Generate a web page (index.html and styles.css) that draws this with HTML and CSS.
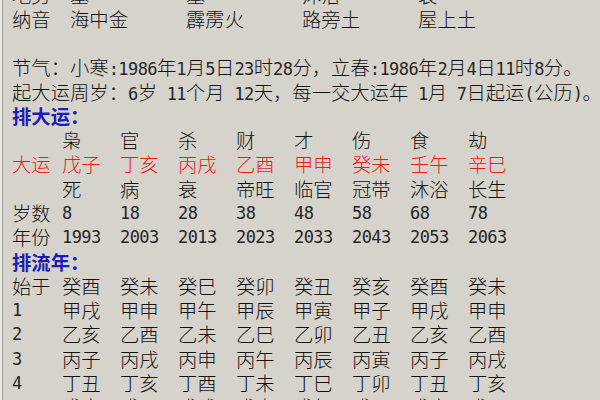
FILE: index.html
```html
<!DOCTYPE html>
<html lang="zh-CN">
<head>
<meta charset="utf-8">
<title>排大运</title>
<link rel="stylesheet" href="styles.css">
</head>
<body>
<div class="screen">
  <div class="sheet">
    <div class="pillars"><span>地势</span><span>墓</span><span>墓</span><span>沐浴</span><span>衰</span></div>
    <div class="pillars"><span>纳音</span><span>海中金</span><span>霹雳火</span><span>路旁土</span><span>屋上土</span></div>
    <div class="blank"></div>
    <p class="line">节气：小寒<span class="a">:1986</span>年<span class="a">1</span>月<span class="a">5</span>日<span class="a">23</span>时<span class="a">28</span>分，立春<span class="a">:1986</span>年<span class="a">2</span>月<span class="a">4</span>日<span class="a">11</span>时<span class="a">8</span>分。</p>
    <p class="line">起大运周岁：<span class="a">6</span>岁<span class="a"> 11</span>个月<span class="a"> 12</span>天，每一交大运年<span class="a"> 1</span>月<span class="a"> 7</span>日起运<span class="a">(</span>公历<span class="a">)</span>。</p>
    <div class="head">排大运：</div>
    <div class="row"><span></span><span>枭</span><span>官</span><span>杀</span><span>财</span><span>才</span><span>伤</span><span>食</span><span>劫</span></div>
    <div class="row red"><span>大运</span><span>戊子</span><span>丁亥</span><span>丙戌</span><span>乙酉</span><span>甲申</span><span>癸未</span><span>壬午</span><span>辛巳</span></div>
    <div class="row"><span></span><span>死</span><span>病</span><span>衰</span><span>帝旺</span><span>临官</span><span>冠带</span><span>沐浴</span><span>长生</span></div>
    <div class="row"><span>岁数</span><span class="a">8</span><span class="a">18</span><span class="a">28</span><span class="a">38</span><span class="a">48</span><span class="a">58</span><span class="a">68</span><span class="a">78</span></div>
    <div class="row"><span>年份</span><span class="a">1993</span><span class="a">2003</span><span class="a">2013</span><span class="a">2023</span><span class="a">2033</span><span class="a">2043</span><span class="a">2053</span><span class="a">2063</span></div>
    <div class="head">排流年：</div>
    <div class="row"><span>始于</span><span>癸酉</span><span>癸未</span><span>癸巳</span><span>癸卯</span><span>癸丑</span><span>癸亥</span><span>癸酉</span><span>癸未</span></div>
    <div class="row"><span class="a">1</span><span>甲戌</span><span>甲申</span><span>甲午</span><span>甲辰</span><span>甲寅</span><span>甲子</span><span>甲戌</span><span>甲申</span></div>
    <div class="row"><span class="a">2</span><span>乙亥</span><span>乙酉</span><span>乙未</span><span>乙巳</span><span>乙卯</span><span>乙丑</span><span>乙亥</span><span>乙酉</span></div>
    <div class="row"><span class="a">3</span><span>丙子</span><span>丙戌</span><span>丙申</span><span>丙午</span><span>丙辰</span><span>丙寅</span><span>丙子</span><span>丙戌</span></div>
    <div class="row"><span class="a">4</span><span>丁丑</span><span>丁亥</span><span>丁酉</span><span>丁未</span><span>丁巳</span><span>丁卯</span><span>丁丑</span><span>丁亥</span></div>
    <div class="row"><span class="a">5</span><span>戊寅</span><span>戊子</span><span>戊戌</span><span>戊申</span><span>戊午</span><span>戊辰</span><span>戊寅</span><span>戊子</span></div>
  </div>
</div>
</body>
</html>
```
FILE: styles.css
```css
html, body {
  margin: 0;
  padding: 0;
  background: #d6d3cc;
  overflow: hidden;
  height: 400px;
}

.screen {
  height: 400px;
  border-left: 2px solid #e9e7e2;
  overflow: hidden;
}

.sheet {
  border-left: 1px solid #a19e97;
  padding-left: 9px;
  margin-top: -17.4px;
  font-family: "Noto Sans CJK SC", sans-serif;
  font-size: 19.33px;
  font-weight: 300;
  line-height: 24.27px;
  color: #111;
}

.a {
  font-family: "DejaVu Sans Mono", "Liberation Mono", monospace;
  font-size: 17px;
  font-weight: 400;
  letter-spacing: -0.56px;
  color: #262626;
  white-space: pre;
}

.pillars {
  display: grid;
  grid-template-columns: 58px repeat(4, 116px);
  height: 24.27px;
}

.blank {
  height: 24.27px;
}

.line {
  margin: 0;
  height: 24.27px;
  white-space: nowrap;
}

.head {
  height: 24.27px;
  color: #1c1cb8;
  font-weight: 700;
}

.row {
  display: grid;
  grid-template-columns: 50px repeat(8, 58px);
  height: 24.27px;
}

.red {
  color: #ec1b1b;
}
```
